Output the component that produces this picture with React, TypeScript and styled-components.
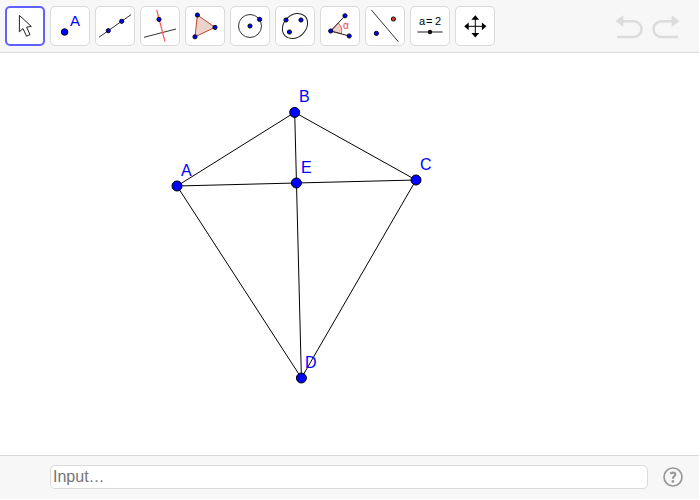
import React from "react";
import styled, { createGlobalStyle } from "styled-components";

const GlobalStyle = createGlobalStyle`
  *, *::before, *::after { box-sizing: border-box; }
  body {
    margin: 0;
    background: #fff;
    font-family: "Liberation Sans", Arial, sans-serif;
  }
`;

const Applet = styled.main`
  display: flex;
  flex-direction: column;
  height: 100vh;
  padding: 0 1px 1px 0;
`;

const Toolbar = styled.header`
  display: flex;
  align-items: center;
  justify-content: space-between;
  padding: 6px 19px 6px 5px;
  background: #f7f7f7;
  border-bottom: 1px solid #d9d9d9;
`;

const ToolGroup = styled.div`
  display: flex;
  gap: 5px;
`;

const ToolButton = styled.button<{ $active?: boolean }>`
  display: flex;
  align-items: center;
  justify-content: center;
  width: 40px;
  height: 40px;
  padding: 0;
  background: #fff;
  border: ${(p) => (p.$active ? "2px solid #6161ff" : "1px solid #dadada")};
  border-radius: 5px;
  cursor: pointer;
`;

const ToolIcon = styled.svg`
  display: block;
  flex: none;
  width: 34px;
  height: 34px;
  font-family: "Liberation Sans", Arial, sans-serif;
`;

const HistoryGroup = styled.div`
  display: flex;
  gap: 9px;
`;

const HistoryButton = styled.button`
  display: flex;
  padding: 0;
  background: none;
  border: 0;
  color: #dcdcdc;
`;

const Stage = styled.section`
  flex: 1;
  min-height: 0;
  overflow: hidden;
`;

const Drawing = styled.svg`
  display: block;
  width: 100%;
  height: 100%;
  font-family: "Liberation Sans", Arial, sans-serif;
  font-size: 16px;
`;

const InputBar = styled.footer`
  display: flex;
  align-items: center;
  gap: 15px;
  padding: 9px 16px 10px 50px;
  background: #f7f7f7;
  border-top: 1px solid #d9d9d9;
`;

const CommandInput = styled.input`
  flex: 1;
  min-width: 0;
  height: 24px;
  padding: 0 2px;
  background: #fff;
  border: 1px solid #dadada;
  border-radius: 5px;
  font-family: inherit;
  font-size: 16px;
  color: #000;
  &::placeholder {
    color: #757575;
    opacity: 1;
  }
`;

const HelpButton = styled.button`
  display: flex;
  padding: 0;
  background: none;
  border: 0;
  color: #999;
  cursor: pointer;
`;

const Dot = ({ x, y, r = 2.1, fill = "#0000ff" }: { x: number; y: number; r?: number; fill?: string }) => (
  <circle cx={x} cy={y} r={r} fill={fill} stroke="#000" strokeWidth={0.9} />
);

const tools: { name: string; art: React.ReactNode }[] = [
  {
    name: "Move",
    art: (
      <path
        d="M14.4 9.4V25.8L18 22.6L21.5 30.2L25 28.6L21.6 21.2L26.3 20.4Z"
        fill="#fff"
        stroke="#222"
        strokeWidth={1}
      />
    ),
  },
  {
    name: "Point",
    art: (
      <>
        <Dot x={14.6} y={26} r={3.3} />
        <text x={20} y={20} fontSize={15} fill="#0000ff">A</text>
      </>
    ),
  },
  {
    name: "Line",
    art: (
      <>
        <path d="M4 31.2L36 8.7" stroke="#333" />
        <Dot x={13.3} y={24.7} />
        <Dot x={26.7} y={15.3} />
      </>
    ),
  },
  {
    name: "Perpendicular Line",
    art: (
      <>
        <path d="M4 31.3L36 23" stroke="#333" />
        <path d="M16.7 4L25 35.7" stroke="#f55" strokeWidth={1.2} />
        <Dot x={19} y={13.4} />
      </>
    ),
  },
  {
    name: "Polygon",
    art: (
      <>
        <path d="M12.4 9L30 21.4L10 30.8Z" fill="#ecd3cc" stroke="#c0452d" />
        <Dot x={12.4} y={9} />
        <Dot x={30} y={21.4} />
        <Dot x={10} y={30.8} />
      </>
    ),
  },
  {
    name: "Circle with Center",
    art: (
      <>
        <circle cx={20} cy={20} r={11.5} fill="none" stroke="#333" />
        <Dot x={20} y={20} />
        <Dot x={29.6} y={13.4} />
      </>
    ),
  },
  {
    name: "Ellipse",
    art: (
      <>
        <ellipse cx={20} cy={20} rx={14} ry={11} transform="rotate(-45 20 20)" fill="none" stroke="#222" />
        <Dot x={11} y={14} />
        <Dot x={26} y={14} />
        <Dot x={14.4} y={26} />
      </>
    ),
  },
  {
    name: "Angle",
    art: (
      <>
        <path d="M10.7 25L18.2 17A11 11 0 0 1 21.3 27.8Z" fill="#f3d0cb" stroke="#f0605a" />
        <path d="M25 9.8L10.7 25L29.2 30" fill="none" stroke="#222" />
        <text x={23} y={23} fontSize={10} fill="#f0453d">α</text>
        <Dot x={10.7} y={25} />
        <Dot x={25} y={9.8} />
        <Dot x={29.2} y={30} />
      </>
    ),
  },
  {
    name: "Reflect about Line",
    art: (
      <>
        <path d="M6.4 4L33.4 35.8" stroke="#333" />
        <Dot x={11.4} y={27.4} />
        <Dot x={28.4} y={13} fill="#d63a2a" />
      </>
    ),
  },
  {
    name: "Slider",
    art: (
      <>
        <text y={19} fontSize={11} fill="#000">
          <tspan x={9}>a</tspan>
          <tspan x={16}>=</tspan>
          <tspan x={25}>2</tspan>
        </text>
        <path d="M7.4 26H32.6" stroke="#444" strokeWidth={1.2} />
        <circle cx={20} cy={26} r={2.2} fill="#111" />
      </>
    ),
  },
  {
    name: "Move Graphics View",
    art: (
      <>
        <path d="M12 20.3H29M20.3 12V29" stroke="#000" strokeWidth={1} />
        <path
          d="M20.3 9.2L24.2 13.7H16.4ZM20.3 31.4L24.2 26.9H16.4ZM9.2 20.3L13.7 16.4V24.2ZM31.4 20.3L26.9 16.4V24.2Z"
          fill="#000"
        />
      </>
    ),
  },
];

const TOP = 53;
const points = {
  A: { x: 177, y: 186, lx: 181, ly: 176 },
  B: { x: 294.7, y: 112.4, lx: 299, ly: 102 },
  C: { x: 416, y: 180, lx: 420, ly: 170 },
  D: { x: 301.4, y: 378, lx: 305, ly: 368 },
  E: { x: 296.4, y: 183, lx: 301, ly: 173 },
};
type Name = keyof typeof points;
const segments: [Name, Name][] = [
  ["A", "B"], ["B", "C"], ["C", "D"], ["D", "A"], ["A", "C"], ["B", "D"],
];
const names = Object.keys(points) as Name[];

export default function App() {
  return (
    <>
      <GlobalStyle />
      <Applet>
        <Toolbar>
          <ToolGroup role="toolbar" aria-label="Tools">
            {tools.map((tool, i) => (
              <ToolButton key={tool.name} type="button" aria-label={tool.name} $active={i === 0}>
                <ToolIcon viewBox="3 3 34 34" aria-hidden="true">{tool.art}</ToolIcon>
              </ToolButton>
            ))}
          </ToolGroup>
          <HistoryGroup>
            <HistoryButton type="button" aria-label="Undo" disabled>
              <svg width="28" height="26" viewBox="0 0 28 26" aria-hidden="true">
                <path d="M0.3 8L8.3 2.2V13.8Z" fill="currentColor" />
                <path d="M7 8.2H18.6A7.9 7.9 0 0 1 18.6 24H2" fill="none" stroke="currentColor" strokeWidth="2.5" />
              </svg>
            </HistoryButton>
            <HistoryButton type="button" aria-label="Redo" disabled>
              <svg width="28" height="26" viewBox="0 0 28 26" aria-hidden="true">
                <path d="M27.7 8L19.7 2.2V13.8Z" fill="currentColor" />
                <path d="M21 8.2H9.4A7.9 7.9 0 0 0 9.4 24H26" fill="none" stroke="currentColor" strokeWidth="2.5" />
              </svg>
            </HistoryButton>
          </HistoryGroup>
        </Toolbar>
        <Stage aria-label="Graphics view">
          <Drawing>
            {segments.map(([a, b]) => (
              <line
                key={a + b}
                x1={points[a].x}
                y1={points[a].y - TOP}
                x2={points[b].x}
                y2={points[b].y - TOP}
                stroke="#000"
                strokeWidth={1}
              />
            ))}
            {names.map((n) => (
              <g key={n}>
                <circle cx={points[n].x} cy={points[n].y - TOP} r={5} fill="#0000ff" stroke="#000" />
                <text x={points[n].lx} y={points[n].ly - TOP} fill="#0000ff">{n}</text>
              </g>
            ))}
          </Drawing>
        </Stage>
        <InputBar>
          <CommandInput type="text" aria-label="Input" placeholder="Input…" />
          <HelpButton type="button" aria-label="Help">
            <svg width="20" height="20" viewBox="0 0 20 20" aria-hidden="true">
              <circle cx="10" cy="10" r="9" fill="none" stroke="currentColor" strokeWidth="1.7" />
              <path
                d="M7.2 6.5C8.2 5.9 9.1 5.6 10 5.6C11.4 5.6 12.3 6.3 12.3 7.5C12.3 9.3 9.9 9.3 9.9 11.8"
                fill="none"
                stroke="currentColor"
                strokeWidth="2.2"
              />
              <circle cx="9.9" cy="14.4" r="1.4" fill="currentColor" />
            </svg>
          </HelpButton>
        </InputBar>
      </Applet>
    </>
  );
}
